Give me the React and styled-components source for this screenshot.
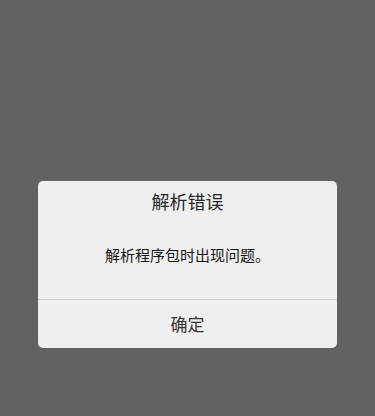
import React from "react";
import styled, { createGlobalStyle } from "styled-components";

const Global = createGlobalStyle`
  html, body { margin: 0; padding: 0; }
  body {
    background: #626262;
    font-family: "Noto Sans CJK SC", "Noto Sans", sans-serif;
  }
`;

const Screen = styled.div`
  height: 416px;
  box-sizing: border-box;
  padding: 181px 38px 0;
  display: flex;
  justify-content: center;
  align-items: flex-start;
`;

const Dialog = styled.div`
  width: 299px;
  background: #efefef;
  border-radius: 5px;
  display: flex;
  flex-direction: column;
  overflow: hidden;
`;

const Title = styled.div`
  padding-top: 9px;
  height: 22px;
  line-height: 22px;
  font-size: 18px;
  color: #262626;
  text-align: center;
`;

const Message = styled.div`
  height: 87px;
  display: flex;
  align-items: center;
  justify-content: center;
  font-size: 15px;
  color: #161616;
  padding-bottom: 2px;
  box-sizing: border-box;
`;

const Divider = styled.div`
  height: 1px;
  background: #d2d2d2;
`;

const Button = styled.button`
  height: 48px;
  border: 0;
  background: transparent;
  font-family: inherit;
  font-size: 17px;
  color: #333333;
  padding: 0 0 2px;
  cursor: pointer;
`;

export default function App() {
  return (
    <>
      <Global />
      <Screen>
        <Dialog>
          <Title>解析错误</Title>
          <Message>解析程序包时出现问题。</Message>
          <Divider />
          <Button>确定</Button>
        </Dialog>
      </Screen>
    </>
  );
}
